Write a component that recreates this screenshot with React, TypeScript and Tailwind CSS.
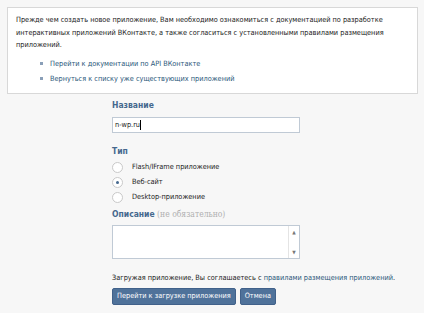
import React from "react";

const font = { fontFamily: '"DejaVu Sans Condensed", "Liberation Sans", Tahoma, sans-serif' };

function Radio({ checked, label }: { checked?: boolean; label: string }) {
  return (
    <div className="flex items-center h-[15px]">
      <span className="w-[11px] h-[11px] rounded-full border border-[#c9c9c9] bg-white flex items-center justify-center">
        {checked && <span className="w-[3px] h-[3px] rounded-full bg-[#45688e]" />}
      </span>
      <span className="ml-[9px] text-[7.3px] text-[#222]">{label}</span>
    </div>
  );
}

export default function App() {
  return (
    <div className="w-[424px] h-[313px] bg-[#f7f7f7] pt-[7px] pl-[7px] overflow-hidden" style={font}>
      <div className="w-[411px] h-[87px] bg-white border border-[#d8d8d8] pl-[8px] pt-[6px]">
        <p className="text-[7.3px] leading-[12.6px] text-[#222] w-[380px]">
          Прежде чем создать новое приложение, Вам необходимо ознакомиться с документацией по разработке интерактивных приложений ВКонтакте, а также согласиться с установленными правилами размещения приложений.
        </p>
        <ul className="mt-[4px] pl-[24px] text-[7.3px] leading-[15px] text-[#2b587a]">
          <li className="flex items-center"><span className="w-[3px] h-[3px] bg-[#8a9fb8] mr-[7px]" />Перейти к документации по API ВКонтакте</li>
          <li className="flex items-center"><span className="w-[3px] h-[3px] bg-[#8a9fb8] mr-[7px]" />Вернуться к списку уже существующих приложений</li>
        </ul>
      </div>
      <div className="pl-[105px] mt-[5px]">
        <div className="text-[8.5px] font-bold text-[#45688e] leading-[12px]">Название</div>
        <div className="mt-[6px] w-[188px] h-[16px] border border-[#c0cad5] bg-white text-[7.3px] leading-[14px] pl-[2px] text-[#222]">n-wp.ru<span className="inline-block w-[1px] h-[10px] bg-black align-middle" /></div>
        <div className="mt-[12px] text-[8.5px] font-bold text-[#45688e] leading-[12px]">Тип</div>
        <div className="mt-[3px]">
          <Radio label="Flash/IFrame приложение" />
          <Radio checked label="Веб-сайт" />
          <Radio label="Desktop-приложение" />
        </div>
        <div className="mt-[3px] text-[8.5px] leading-[12px]">
          <span className="font-bold text-[#45688e]">Описание</span>{" "}
          <span className="text-[#b0b0b0]" style={{ fontFamily: '"DejaVu Serif Condensed", "Liberation Serif", serif' }}>(не обязательно)</span>
        </div>
        <div className="mt-[5px] w-[188px] h-[34px] border border-[#c0cad5] bg-white flex justify-end">
          <div className="w-[11px] h-full border-l border-[#e4e4e4] flex flex-col items-center justify-between py-[3px]">
            <span className="text-[5px] leading-[6px] text-[#777]">▲</span>
            <span className="text-[5px] leading-[6px] text-[#777]">▼</span>
          </div>
        </div>
        <div className="mt-[13px] text-[7.3px] leading-[12px] text-[#222] whitespace-nowrap">
          Загружая приложение, Вы соглашаетесь с <span className="text-[#2b587a]">правилами размещения приложений</span>.
        </div>
        <div className="mt-[4px] flex gap-[4px]">
          <button className="h-[17px] px-[4px] bg-[#4f729a] border border-[#41618a] text-white text-[7.3px] rounded-[2px]" style={font}>Перейти к загрузке приложения</button>
          <button className="h-[17px] px-[4px] bg-[#4f729a] border border-[#41618a] text-white text-[7.3px] rounded-[2px]" style={font}>Отмена</button>
        </div>
      </div>
    </div>
  );
}
